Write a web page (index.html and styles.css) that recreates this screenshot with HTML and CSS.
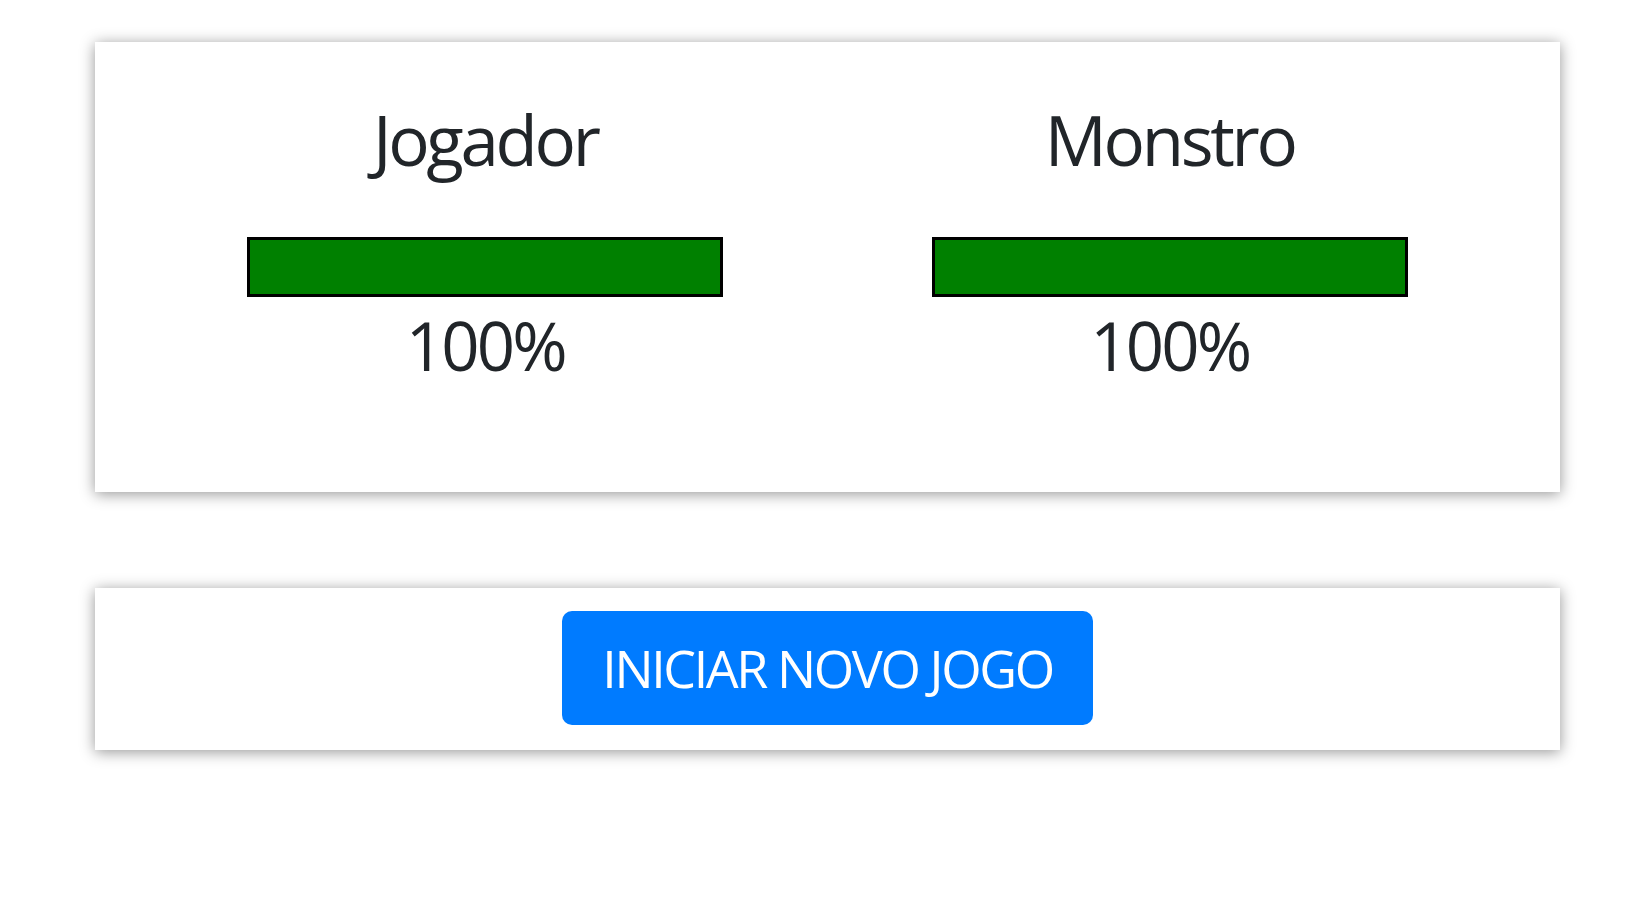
FILE: index.html
```html
<!DOCTYPE html>
<html lang="pt">
<head>
<meta charset="utf-8">
<title>Monster Slayer</title>
<link rel="stylesheet" href="styles.css">
</head>
<body>
  <section class="card health">
    <div class="combatant">
      <h2 class="name">Jogador</h2>
      <div class="bar"><div class="fill" style="width: 100%"></div></div>
      <p class="percent">100%</p>
    </div>
    <div class="combatant">
      <h2 class="name">Monstro</h2>
      <div class="bar"><div class="fill" style="width: 100%"></div></div>
      <p class="percent">100%</p>
    </div>
  </section>
  <section class="card controls">
    <button class="btn-start" type="button">INICIAR NOVO JOGO</button>
  </section>
</body>
</html>
```
FILE: styles.css
```css
html, body {
  margin: 0;
  padding: 0;
  background: #ffffff;
}
body {
  font-family: "Segoe UI", "Open Sans", "Noto Sans", sans-serif;
  color: #212529;
  min-height: 899px;
}
.card {
  background: #ffffff;
  box-shadow: 0 2px 14px rgba(0, 0, 0, 0.42);
  margin: 0 90px 0 95px;
}
.health {
  margin-top: 42px;
  height: 450px;
  box-sizing: border-box;
  padding: 56px 48px 0;
  display: grid;
  grid-template-columns: 1fr 1fr;
}
.combatant {
  display: flex;
  flex-direction: column;
  align-items: center;
}
.name {
  margin: 0;
  font-weight: 400;
  font-size: 69px;
  line-height: 83px;
  letter-spacing: -3.3px;
}
.bar {
  margin-top: 56px;
  width: 476px;
  height: 60px;
  box-sizing: border-box;
  border: 3px solid #000;
  background: #fff;
}
.fill {
  height: 100%;
  background: #008000;
}
.percent {
  margin: 8px 0 0;
  font-size: 67px;
  line-height: 80px;
  letter-spacing: -2.8px;
}
.controls {
  margin-top: 96px;
  margin-bottom: 60px;
  padding: 23px 0 25px;
  display: flex;
  justify-content: center;
}
.btn-start {
  font-family: inherit;
  font-size: 52px;
  line-height: 80px;
  padding: 17px 40px;
  letter-spacing: -2.4px;
  color: #ffffff;
  background: #007bff;
  border: none;
  border-radius: 10px;
  cursor: pointer;
}
```
